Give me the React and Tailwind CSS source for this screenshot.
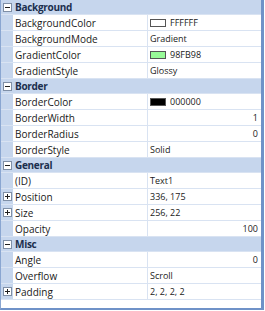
import React from "react";

const sections = [
  {
    title: "Background",
    rows: [
      { name: "BackgroundColor", value: "FFFFFF", swatch: "#ffffff" },
      { name: "BackgroundMode", value: "Gradient" },
      { name: "GradientColor", value: "98FB98", swatch: "#98fb98" },
      { name: "GradientStyle", value: "Glossy" },
    ],
  },
  {
    title: "Border",
    rows: [
      { name: "BorderColor", value: "000000", swatch: "#000000" },
      { name: "BorderWidth", value: "1", right: true },
      { name: "BorderRadius", value: "0", right: true },
      { name: "BorderStyle", value: "Solid" },
    ],
  },
  {
    title: "General",
    rows: [
      { name: "(ID)", value: "Text1" },
      { name: "Position", value: "336, 175", plus: true },
      { name: "Size", value: "256, 22", plus: true },
      { name: "Opacity", value: "100", right: true },
    ],
  },
  {
    title: "Misc",
    rows: [
      { name: "Angle", value: "0", right: true },
      { name: "Overflow", value: "Scroll" },
      { name: "Padding", value: "2, 2, 2, 2", plus: true },
    ],
  },
];

function Box({ plus }) {
  return (
    <svg width="9" height="9" viewBox="0 0 9 9" className="block">
      <rect x="0.5" y="0.5" width="8" height="8" fill="#ffffff" stroke="#7f8fa6" />
      <line x1="2" y1="4.5" x2="7" y2="4.5" stroke="#1f1f1f" />
      {plus && <line x1="4.5" y1="2" x2="4.5" y2="7" stroke="#1f1f1f" />}
    </svg>
  );
}

export default function App() {
  return (
    <div
      className="w-[265px] h-[311px] bg-white overflow-hidden"
      style={{ fontFamily: '"Open Sans", "Noto Sans", sans-serif' }}
    >
      <div className="w-[264px] h-[310px] border-l border-[#8aa6d1] border-b-2 border-b-[#6f92c8] border-r-[3px] border-r-[#6f92c8] flex flex-col">
        {sections.map((s) => (
          <div key={s.title} className="flex flex-col">
            <div className="h-[15px] bg-[#c6d6ed] flex items-center border-b border-[#d9e3f2]">
              <div className="w-[12px] flex justify-center">
                <Box />
              </div>
              <span className="ml-[2px] text-[10px] font-bold text-[#1b2f4e] leading-none tracking-[-0.3px]">
                {s.title}
              </span>
            </div>
            {s.rows.map((r) => (
              <div key={r.name} className="h-[16px] flex border-b border-[#d9e3f2]">
                <div className="w-[12px] bg-[#c6d6ed] flex items-center justify-center">
                  {r.plus && <Box plus />}
                </div>
                <div className="w-[135px] pl-[2px] flex items-center border-r border-[#d9e3f2] text-[10px] text-[#1a1a1a] leading-none">
                  {r.name}
                </div>
                <div
                  className={
                    "flex-1 flex items-center pl-[2px] pr-[3px] text-[9px] text-[#1a1a1a] leading-none " +
                    (r.right ? "justify-end" : "")
                  }
                >
                  {r.swatch && (
                    <span
                      className="inline-block w-[16px] h-[8px] border border-[#555] mr-[4px]"
                      style={{ backgroundColor: r.swatch }}
                    />
                  )}
                  {r.value}
                </div>
              </div>
            ))}
          </div>
        ))}
        <div className="flex-1" />
      </div>
    </div>
  );
}
